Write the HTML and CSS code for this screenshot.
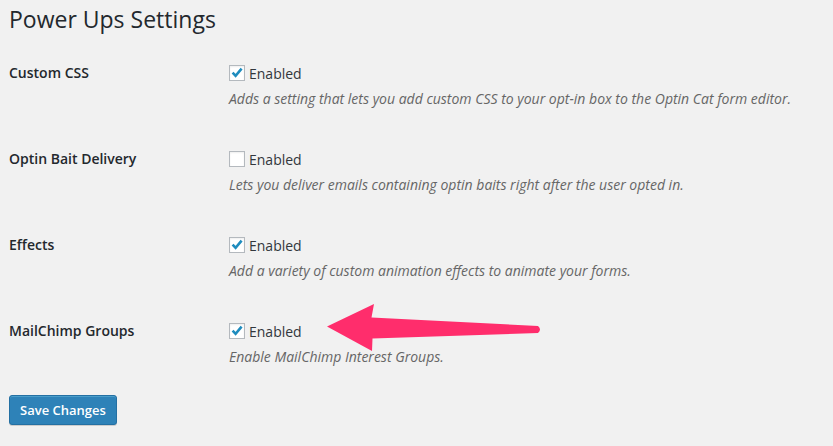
FILE: index.html
```html
<!DOCTYPE html>
<html>
<head>
<meta charset="utf-8">
<link rel="stylesheet" href="styles.css">
</head>
<body>
<div class="wrap">
  <h1 class="title">Power Ups Settings</h1>
  <div class="table">
    <div class="row">
      <div class="label">Custom CSS</div>
      <div class="field">
        <label class="check"><span class="box checked"><svg viewBox="0 0 16 16" width="16" height="16"><path d="M3.6 7.6 L6.6 10.8 L12.6 3.6" fill="none" stroke="#1e8cbe" stroke-width="2.6" stroke-linecap="butt"/></svg></span>Enabled</label>
        <p class="desc">Adds a setting that lets you add custom CSS to your opt-in box to the Optin Cat form editor.</p>
      </div>
    </div>
    <div class="row">
      <div class="label">Optin Bait Delivery</div>
      <div class="field">
        <label class="check"><span class="box"></span>Enabled</label>
        <p class="desc">Lets you deliver emails containing optin baits right after the user opted in.</p>
      </div>
    </div>
    <div class="row">
      <div class="label">Effects</div>
      <div class="field">
        <label class="check"><span class="box checked"><svg viewBox="0 0 16 16" width="16" height="16"><path d="M3.6 7.6 L6.6 10.8 L12.6 3.6" fill="none" stroke="#1e8cbe" stroke-width="2.6"/></svg></span>Enabled</label>
        <p class="desc">Add a variety of custom animation effects to animate your forms.</p>
      </div>
    </div>
    <div class="row">
      <div class="label">MailChimp Groups</div>
      <div class="field">
        <label class="check"><span class="box checked"><svg viewBox="0 0 16 16" width="16" height="16"><path d="M3.6 7.6 L6.6 10.8 L12.6 3.6" fill="none" stroke="#1e8cbe" stroke-width="2.6"/></svg></span>Enabled</label>
        <p class="desc">Enable MailChimp Interest Groups.</p>
      </div>
    </div>
  </div>
  <button class="btn">Save Changes</button>
  <svg class="arrow" width="240" height="60" viewBox="320 296 240 60">
    <path d="M327 326.5 L374 304 L371.5 317.5 L538 326 Q542 329.5 538 333 L372.5 338.5 L372 351 Z" fill="#ff2d6c"/>
  </svg>
</div>
</body>
</html>
```
FILE: styles.css
```css
html, body {
  margin: 0;
  padding: 0;
  background: #f1f1f1;
}
body {
  font-family: "Open Sans", "Liberation Sans", sans-serif;
  color: #23282d;
}
.wrap {
  position: relative;
  padding: 5px 0 0 9px;
  height: 441px;
  box-sizing: border-box;
}
.title {
  margin: 0 0 15px;
  font-size: 23px;
  font-weight: 400;
  line-height: 29px;
  color: #23282d;
}
.row {
  display: flex;
  padding: 14px 0 26px;
}
.label {
  width: 220px;
  flex: none;
  font-size: 14px;
  font-weight: 600;
  line-height: 20px;
  color: #23282d;
}
.field {
  display: flex;
  flex-direction: column;
}
.check {
  display: flex;
  align-items: center;
  height: 20px;
  font-size: 14px;
  color: #32373c;
}
.box {
  width: 16px;
  height: 16px;
  box-sizing: border-box;
  border: 1px solid #b4b9be;
  background: #fff;
  box-shadow: inset 0 1px 2px rgba(0,0,0,0.07);
  margin-right: 4px;
  position: relative;
  display: block;
}
.box svg {
  position: absolute;
  left: -1px;
  top: -1px;
}
.desc {
  margin: 6px 0 0;
  font-size: 14px;
  font-style: italic;
  line-height: 20px;
  color: #666;
}
.btn {
  margin-top: 2px;
  height: 30px;
  padding: 0 10px 1px;
  font-family: "Open Sans", "Liberation Sans", sans-serif;
  font-size: 13px;
  font-weight: 600;
  color: #fff;
  background: #2e82b8;
  border: 1px solid #2470a3;
  border-radius: 3px;
  box-shadow: inset 0 1px 0 rgba(120,200,230,0.4), 0 1px 0 rgba(0,0,0,0.15);
}
.arrow {
  position: absolute;
  left: 320px;
  top: 296px;
}
```
